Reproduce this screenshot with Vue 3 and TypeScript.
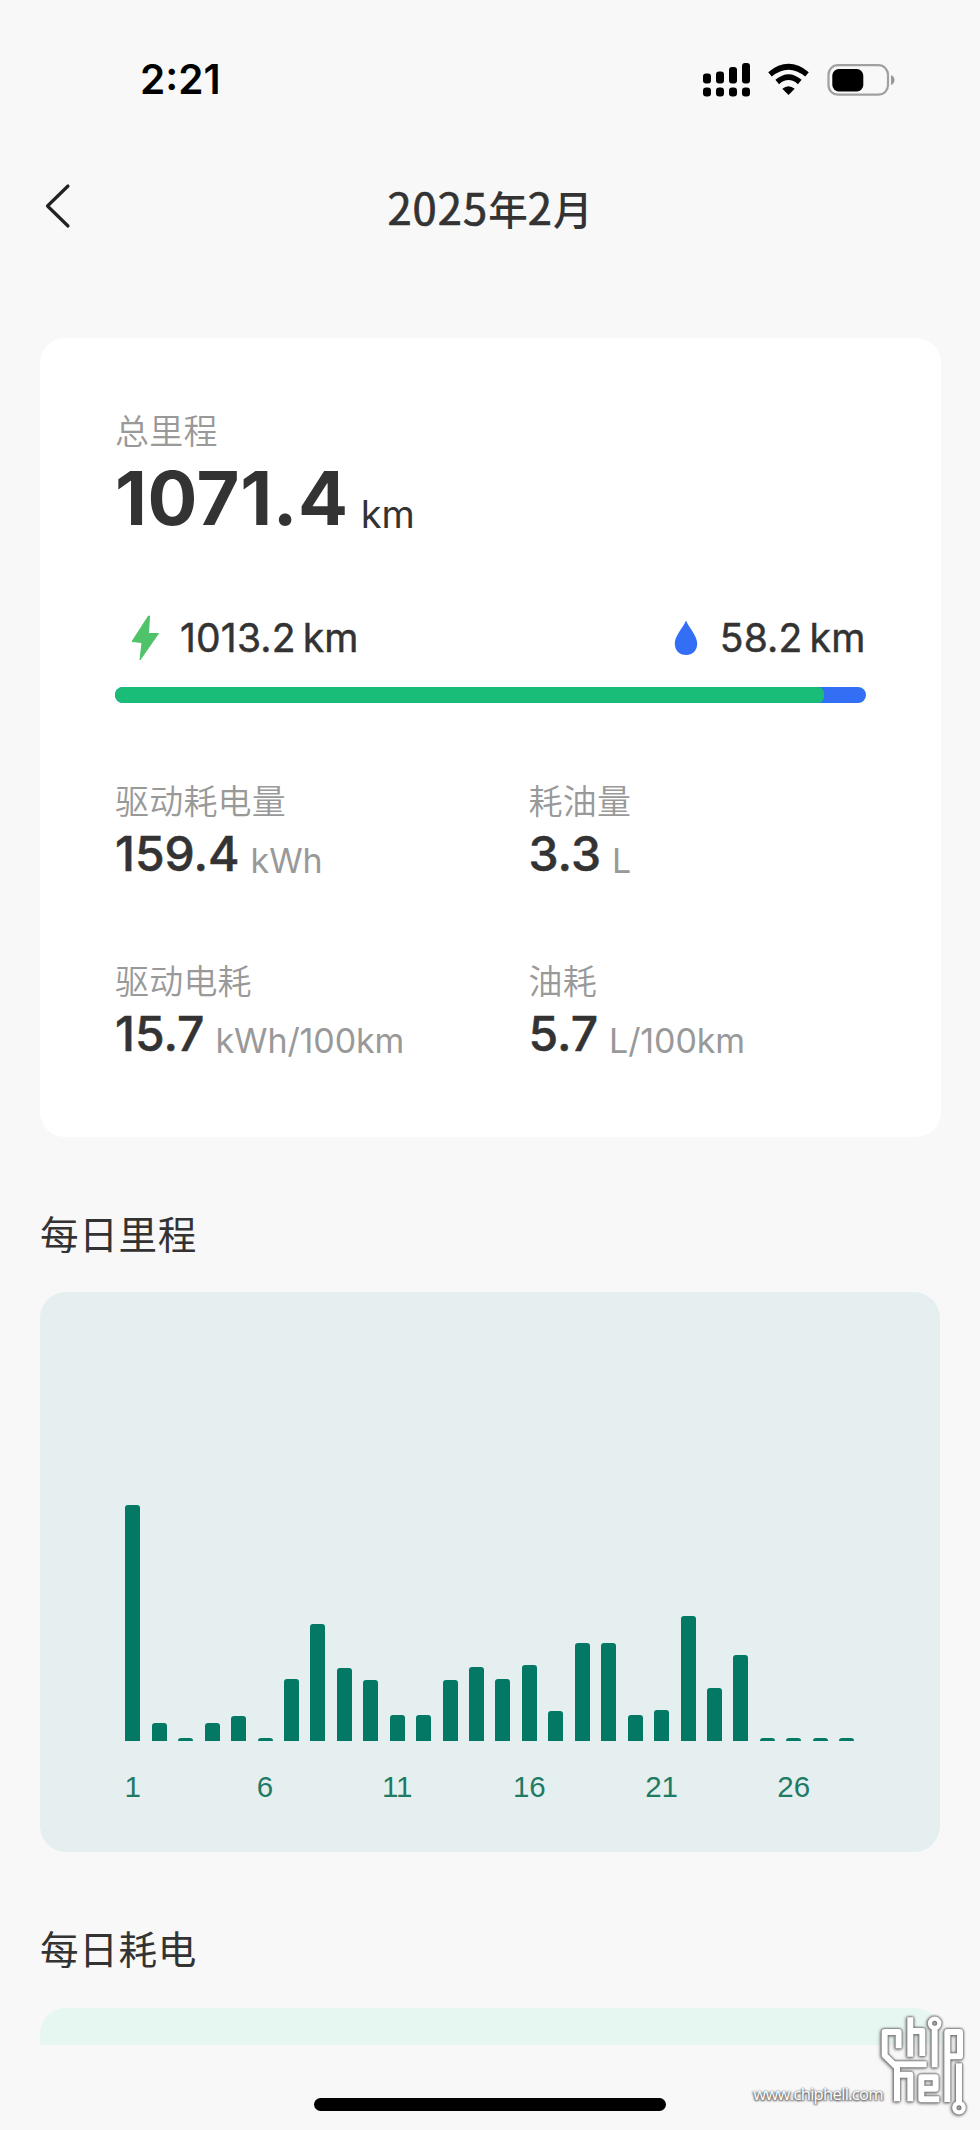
<script setup lang="ts">
interface Metric {
  label: string
  value: string
  unit: string
}

const metrics: Metric[] = [
  { label: '驱动耗电量', value: '159.4', unit: 'kWh' },
  { label: '耗油量', value: '3.3', unit: 'L' },
  { label: '驱动电耗', value: '15.7', unit: 'kWh/100km' },
  { label: '油耗', value: '5.7', unit: 'L/100km' },
]

// Bar heights for each day of the month
const days: number[] = [
  236, 18, 2.5, 18, 25, 2.5, 61.5, 117, 73, 60.5, 25.5, 25.5, 61, 74,
  61.5, 75.5, 30, 98, 97.5, 25.5, 30.5, 125, 52.5, 85.5, 2.5, 2.5, 2.5, 2.5,
]

const electricShare = 94.5
</script>

<template>
  <main class="screen">
    <div class="status">
      <span class="time">2:21</span>
      <svg class="status-icons" viewBox="0 0 194 36" width="194" height="36">
        <g fill="#000">
          <rect x="0" y="12.5" width="8" height="10" rx="3" />
          <rect x="13" y="10.5" width="8" height="12" rx="3" />
          <rect x="26" y="6" width="8" height="16.500" rx="3" />
          <rect x="39" y="2" width="8" height="20.500" rx="3" />
          <rect x="0" y="26.500" width="8" height="9" rx="3.200" />
          <rect x="13" y="26.500" width="8" height="9" rx="3.200" />
          <rect x="26" y="26.500" width="8" height="9" rx="3.200" />
          <rect x="39" y="26.500" width="8" height="9" rx="3.200" />
          <path d="M85.500 34 L79.300 27.700 Q85.500 22.700 91.700 27.700 Z" />
        </g>
        <g fill="none" stroke="#000" stroke-width="5.600">
          <path d="M67 13.300 Q85.500 -1.800 104 13.300" />
          <path d="M74.200 21 Q85.500 11.400 96.800 21" />
        </g>
        <rect x="125.500" y="4.200" width="59.500" height="29.500" rx="9.500" fill="none" stroke="#a0a0a0" stroke-width="2.200" />
        <rect x="129.300" y="8" width="31" height="22.500" rx="6.500" fill="#000" />
        <path d="M188 14 Q191.500 15.500 191.500 19 Q191.500 22.500 188 24 Z" fill="#999" />
      </svg>
    </div>

    <header class="nav">
      <svg class="back" viewBox="0 0 28 48" width="28" height="48">
        <path d="M24 4 L3.500 24 L24 44" fill="none" stroke="#222" stroke-width="3.200" stroke-linecap="round" stroke-linejoin="round" />
      </svg>
      <h1 class="title"><span class="num">2025</span>年<span class="num">2</span>月</h1>
    </header>

    <section class="card">
      <div class="label">总里程</div>
      <div class="total">
        <span class="total-value">1071.4</span>
        <span class="total-unit">km</span>
      </div>
      <div class="sources">
        <div class="source">
          <svg class="bolt" viewBox="0 0 28 46" width="28" height="46">
            <path d="M17.500 1 L1 26.500 L11 27.500 L9 45 L27.500 18.500 L17.500 18.500 L18.500 1 Z" fill="#4fc36a" stroke="#4fc36a" stroke-linejoin="round" />
          </svg>
          <span class="source-value">1013.2</span>
          <span class="source-unit">km</span>
        </div>
        <div class="source">
          <svg class="drop" viewBox="0 0 24 36" width="24" height="36">
            <path d="M12 .5 C9.500 7 .8 15.500 .8 23.500 C.8 30.500 5.500 35 12 35 C18.500 35 23.200 30.500 23.200 23.500 C23.200 15.500 14.500 7 12 .5 Z" fill="#336ff5" />
          </svg>
          <span class="source-value">58.2</span>
          <span class="source-unit">km</span>
        </div>
      </div>
      <div class="split">
        <div class="split-electric" :style="{ width: electricShare + '%' }"></div>
      </div>
      <div class="metrics">
        <div v-for="metric in metrics" :key="metric.label" class="metric">
          <div class="label">{{ metric.label }}</div>
          <div class="metric-row">
            <span class="metric-value">{{ metric.value }}</span>
            <span class="metric-unit">{{ metric.unit }}</span>
          </div>
        </div>
      </div>
    </section>

    <h2 class="section-title">每日里程</h2>
    <section class="chart">
      <div v-for="(height, index) in days" :key="index" class="day">
        <div class="bar" :style="{ height: height + 'px' }"></div>
        <span class="tick">{{ index % 5 === 0 ? index + 1 : '' }}</span>
      </div>
    </section>

    <h2 class="section-title second">每日耗电</h2>
    <section class="next-chart"></section>

    <div class="home-bar"></div>

    <div class="watermark">
      <span class="site">www.chiphell.com</span>
      <svg class="mark" viewBox="444 96 279 330" width="93" height="110">
        <g fill="none" stroke="#fff" stroke-width="18" stroke-linejoin="round">
          <path d="M506 205 V156 H464 V226 L501 262 V364" />
          <path d="M492 253 H590" />
          <path d="M541 112 V230 M541 153 H577 V228" />
          <path d="M614 148 V262" />
          <path d="M652 366 V156 H690 V229 H652" />
          <path d="M501 284 H541 V364" />
          <path d="M628 358 H574 V292 H617 V326 H574" />
          <path d="M687 250 V370" />
          <circle cx="614" cy="130" r="14" stroke-width="13" />
          <circle cx="687" cy="383" r="14" stroke-width="13" />
        </g>
      </svg>
    </div>
  </main>
</template>

<style>
body {
  margin: 0;
  background: #f8f8f8;
}
</style>

<style scoped>
.screen {
  position: relative;
  box-sizing: border-box;
  width: 980px;
  height: 2130px;
  padding: 0 40px;
  overflow: hidden;
  background: #f8f8f8;
  color: #333;
  font-family: Inter, "Noto Sans CJK SC", sans-serif;
}

.status {
  display: flex;
  align-items: center;
  justify-content: space-between;
  height: 160px;
  padding: 0 43px 0 100px;
}

.time {
  color: #000;
  font-size: 40.5px;
  font-weight: 600;
  line-height: 48px;
}

.status-icons {
  margin: 0 0 3px;
}

.nav {
  display: flex;
  align-items: center;
  height: 92px;
}

.back {
  margin-left: 4px;
}

.title {
  flex: 1;
  margin: 5px 32px 0 0;
  font-size: 39.5px;
  font-weight: 500;
  line-height: 60px;
  text-align: center;
}

.num {
  font-family: "Noto Sans CJK SC", sans-serif;
  font-size: 43.5px;
  font-weight: 400;
  letter-spacing: 1.1px;
  -webkit-text-stroke: 0.7px #333;
}

.card {
  box-sizing: border-box;
  width: 901px;
  height: 799px;
  margin-top: 86px;
  padding: 74px 75.5px 0 75px;
  border-radius: 25px;
  background: #fff;
}

.label {
  color: #999;
  font-size: 34px;
  font-weight: 350;
  line-height: 40px;
  letter-spacing: 0.2px;
}

.total {
  display: flex;
  align-items: flex-end;
  margin-top: 8.5px;
}

.total-value {
  font-size: 74px;
  font-weight: 700;
  line-height: 74px;
  letter-spacing: 0.6px;
}

.total-unit {
  margin-left: 12px;
  font-size: 38px;
  line-height: 42px;
}

.sources {
  display: flex;
  justify-content: space-between;
  margin-top: 79.5px;
  padding-left: 16px;
}

.source {
  display: flex;
  align-items: center;
  font-size: 39px;
  font-weight: 400;
  line-height: 48px;
  letter-spacing: 0.2px;
  -webkit-text-stroke: 0.5px #333;
}

.bolt {
  margin-right: 21px;
}

.drop {
  margin-right: 22px;
}

.source-unit {
  margin-left: 7px;
}

.split {
  height: 15.5px;
  margin-top: 25px;
  overflow: hidden;
  border-radius: 8px;
  background: #336ff5;
}

.split-electric {
  height: 100%;
  border-radius: 0 6px 6px 0;
  background: #1abd78;
}

.metrics {
  display: grid;
  grid-template-columns: 413.5px 1fr;
  row-gap: 84px;
  margin-top: 79px;
}

.metric-row {
  display: flex;
  align-items: flex-end;
  margin-top: 8px;
}

.metric-value {
  font-size: 48px;
  font-weight: 500;
  line-height: 48px;
  -webkit-text-stroke: 0.5px #333;
}

.metric-unit {
  margin-left: 11px;
  color: #999;
  font-size: 34px;
  font-weight: 400;
  line-height: 34px;
  letter-spacing: -0.1px;
}

.section-title {
  margin: 73.5px 0 33.5px;
  font-size: 38.6px;
  font-weight: 400;
  line-height: 48px;
  letter-spacing: 0.7px;
}

.chart {
  display: flex;
  box-sizing: border-box;
  width: 900px;
  height: 560px;
  padding: 0 0 50px 79.6px;
  border-radius: 26px;
  background: #e6efef;
}

.day {
  display: flex;
  flex-direction: column;
  align-items: center;
  justify-content: flex-end;
  width: 26.44px;
}

.bar {
  flex: none;
  width: 15px;
  border-radius: 3px 3px 0 0;
  background: #037864;
}

.tick {
  display: flex;
  justify-content: center;
  width: 40px;
  height: 61.5px;
  color: #1f7a66;
  font-family: "Liberation Sans", Arial, sans-serif;
  font-size: 29.5px;
  line-height: 91px;
}

.section-title.second {
  margin-top: 74px;
  margin-bottom: 34px;
}

.next-chart {
  width: 901px;
  height: 36.5px;
  border-radius: 26px 26px 0 0;
  background: #e6f6f0;
}

.home-bar {
  width: 351.5px;
  height: 12.5px;
  margin: 53.5px auto 0;
  border-radius: 7px;
  background: #000;
}

.watermark {
  position: absolute;
  right: 9px;
  bottom: 8px;
  display: flex;
  align-items: flex-end;
}

.site {
  margin: 0 -5px 17px 0;
  color: #fff;
  font-family: "Open Sans", sans-serif;
  font-size: 16.6px;
  font-weight: 500;
  letter-spacing: -0.7px;
  line-height: 22px;
  text-shadow: 0 0 2px #666, 1px 1px 2px #666, -1px 1px 2px #777;
}

.mark {
  filter: drop-shadow(0 0 1px #666) drop-shadow(0 0 1px #777) drop-shadow(-1px 1px 1px #aaa);
}
</style>
